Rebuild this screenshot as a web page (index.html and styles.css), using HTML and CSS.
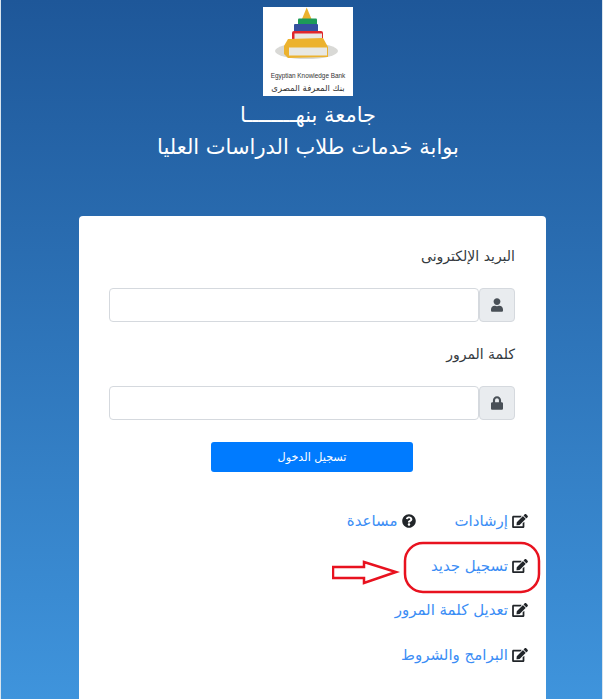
FILE: index.html
```html
<!DOCTYPE html>
<html lang="ar" dir="rtl">
<head>
    <meta charset="UTF-8">
    <meta name="viewport" content="width=device-width, initial-scale=1.0">
    <title>بوابة خدمات طلاب الدراسات العليا</title>
    <link rel="stylesheet" href="styles.css">
</head>
<body>
    <svg class="icon-defs" aria-hidden="true">
        <symbol id="i-user" viewBox="0 0 448 512"><path d="M224 256c70.7 0 128-57.3 128-128S294.7 0 224 0 96 57.3 96 128s57.3 128 128 128zm89.6 32h-16.7c-22.2 10.2-46.9 16-72.9 16s-50.6-5.8-72.9-16h-16.7C60.2 288 0 348.2 0 422.4V464c0 26.5 21.5 48 48 48h352c26.5 0 48-21.5 48-48v-41.6c0-74.2-60.2-134.4-134.4-134.4z"/></symbol>
        <symbol id="i-lock" viewBox="0 0 448 512"><path d="M400 224h-24v-72C376 68.2 307.8 0 224 0S72 68.2 72 152v72H48c-26.5 0-48 21.5-48 48v192c0 26.5 21.5 48 48 48h352c26.5 0 48-21.5 48-48V272c0-26.5-21.5-48-48-48zm-104 0H152v-72c0-39.7 32.3-72 72-72s72 32.3 72 72v72z"/></symbol>
        <symbol id="i-edit" viewBox="0 0 576 512"><path d="M402.6 83.2l90.2 90.2c3.8 3.8 3.8 10 0 13.8L274.4 405.6l-92.8 10.3c-12.4 1.4-22.9-9.1-21.5-21.5l10.3-92.8L388.8 83.2c3.8-3.8 10-3.8 13.8 0zm162-22.9l-48.8-48.8c-15.2-15.2-39.9-15.2-55.2 0l-35.4 35.4c-3.8 3.8-3.8 10 0 13.8l90.2 90.2c3.8 3.8 10 3.8 13.8 0l35.4-35.4c15.2-15.3 15.2-40 0-55.2zM384 346.2V448H64V128h229.8c3.2 0 6.2-1.3 8.5-3.5l40-40c7.6-7.6 2.2-20.5-8.5-20.5H48C21.5 64 0 85.5 0 112v352c0 26.5 21.5 48 48 48h352c26.5 0 48-21.5 48-48V306.2c0-10.7-12.9-16-20.5-8.5l-40 40c-2.2 2.3-3.5 5.3-3.5 8.5z"/></symbol>
        <symbol id="i-help" viewBox="0 0 512 512"><path d="M504 256c0 136.997-111.043 248-248 248S8 392.997 8 256C8 119.083 119.043 8 256 8s248 111.083 248 248zM262.655 90c-54.497 0-89.255 22.957-116.549 63.758-3.536 5.286-2.353 12.415 2.715 16.258l34.699 26.31c5.205 3.947 12.621 3.008 16.665-2.122 17.864-22.658 30.113-35.797 57.303-35.797 20.429 0 45.698 13.148 45.698 32.958 0 14.976-12.363 22.667-32.534 33.976C247.128 238.528 216 254.941 216 296v4c0 6.627 5.373 12 12 12h56c6.627 0 12-5.373 12-12v-1.333c0-28.462 83.186-29.647 83.186-106.667 0-58.002-60.165-102-116.531-102zM256 338c-25.365 0-46 20.635-46 46 0 25.364 20.635 46 46 46s46-20.636 46-46c0-25.365-20.635-46-46-46z"/></symbol>
    </svg>

    <div class="page">
        <header class="hero">
            <svg class="logo" viewBox="0 0 90 89" role="img" aria-label="Egyptian Knowledge Bank">
                <rect class="logo-bg" width="90" height="89"/>
                <ellipse class="logo-shadow" cx="43.5" cy="44" rx="31.5" ry="8"/>
                <polygon class="logo-gold" points="43.7,0.5 39,12 48.5,12"/>
                <rect class="logo-green" x="35" y="11.5" width="19" height="7.5" rx="1"/>
                <rect class="logo-blue" x="31" y="17" width="24" height="9" rx="1"/>
                <rect class="logo-red" x="29" y="24" width="31" height="12" rx="2"/>
                <rect class="logo-page" x="31.5" y="26.5" width="27.5" height="7.5"/>
                <polygon class="logo-gold" points="25,32 60,31 65,40 65,50 25,51 21,47 21,39"/>
                <rect class="logo-page" x="26" y="40.5" width="38" height="8"/>
                <text class="logo-en" x="45" y="71" direction="ltr" text-anchor="middle">Egyptian Knowledge Bank</text>
                <text class="logo-ar" x="45" y="84" text-anchor="middle">بنك المعرفة المصرى</text>
            </svg>
            <h1 class="hero-title">جامعة بنهــــــــا</h1>
            <h2 class="hero-sub">بوابة خدمات طلاب الدراسات العليا</h2>
        </header>

        <main class="login-card">
            <label class="field-label">البريد الإلكترونى</label>
            <div class="input-group">
                <span class="input-addon"><svg class="addon-icon"><use href="#i-user"/></svg></span>
                <input class="input-box" type="text">
            </div>

            <label class="field-label second">كلمة المرور</label>
            <div class="input-group">
                <span class="input-addon"><svg class="addon-icon"><use href="#i-lock"/></svg></span>
                <input class="input-box" type="password">
            </div>

            <div class="submit-row">
                <button class="submit-button" type="button">تسجيل الدخول</button>
            </div>

            <ul class="link-list">
                <li class="link-row">
                    <a class="card-link" href="#"><svg class="link-icon"><use href="#i-edit"/></svg>إرشادات</a>
                    <a class="card-link help-link" href="#"><svg class="help-icon"><use href="#i-help"/></svg>مساعدة</a>
                </li>
                <li class="link-row"><a class="card-link" href="#"><svg class="link-icon"><use href="#i-edit"/></svg>تسجيل جديد</a></li>
                <li class="link-row"><a class="card-link" href="#"><svg class="link-icon"><use href="#i-edit"/></svg>تعديل كلمة المرور</a></li>
                <li class="link-row"><a class="card-link" href="#"><svg class="link-icon"><use href="#i-edit"/></svg>البرامج والشروط</a></li>
            </ul>
        </main>

        <!-- red markup drawn on top of the screenshot -->
        <svg class="markup" viewBox="0 0 212 54" aria-hidden="true">
            <rect class="markup-line" x="73" y="2" width="134" height="49" rx="18"/>
            <polygon class="markup-line" points="1,26 32,26 32,21 64,31 32,42 32,37 1,37"/>
        </svg>
    </div>
</body>
</html>
```

FILE: styles.css
```css
* {
    box-sizing: border-box;
}

html, body {
    margin: 0;
    height: 699px;
    overflow: hidden;
}

body {
    font-family: "DejaVu Sans", sans-serif;
    background-color: #fff;
}

.icon-defs {
    display: none;
}

.page {
    position: relative;
    height: 699px;
    display: flex;
    flex-direction: column;
    background: linear-gradient(to bottom, #1e5799 0%, #3f94dc 100%);
    border-left: 1px solid #d8e4ee;
    border-right: 1px solid #d8e4ee;
}

.hero {
    display: flex;
    flex-direction: column;
    align-items: center;
    padding: 7px 0 0 13px;
    color: #fff;
}

.logo {
    width: 90px;
    height: 89px;
    display: block;
}

.logo-bg { fill: #fff; }
.logo-shadow { fill: #d9d9d6; }
.logo-gold { fill: #ecb22e; }
.logo-green { fill: #1d9a58; }
.logo-blue { fill: #34509f; }
.logo-red { fill: #e0262c; }
.logo-page { fill: #e8e8e4; }

.logo-en {
    font-family: "Liberation Sans", sans-serif;
    font-size: 6.4px;
    fill: #333;
}

.logo-ar {
    font-family: "DejaVu Sans", sans-serif;
    font-size: 8.5px;
    fill: #333;
}

.hero-title,
.hero-sub {
    margin: 0;
    font-size: 21px;
    font-weight: normal;
    line-height: 32px;
}

.hero-title {
    margin-top: 3px;
}

.login-card {
    flex: 1;
    width: 467px;
    margin: 53px 56px 0 0;
    padding: 28px 31px 0 30px;
    background-color: #fff;
    border-radius: 4px 4px 0 0;
    color: #343a40;
}

.field-label {
    display: block;
    font-size: 14px;
    line-height: 24px;
}

.field-label.second {
    margin-top: 20px;
}

.input-group {
    display: flex;
    height: 34px;
    margin-top: 20px;
}

.input-addon {
    width: 36px;
    display: flex;
    align-items: center;
    justify-content: center;
    background-color: #e9ecef;
    border: 1px solid #d5d9de;
    border-radius: 4px;
}

.addon-icon {
    width: 12px;
    height: 14px;
    fill: #495057;
}

.input-box {
    flex: 1;
    min-width: 0;
    background-color: #fff;
    border: 1px solid #d5d9de;
    border-radius: 4px;
}

.submit-row {
    display: flex;
    justify-content: center;
    margin-top: 22px;
}

.submit-button {
    width: 202px;
    height: 30px;
    font-family: inherit;
    font-size: 11.2px;
    color: #fff;
    background-color: #007bff;
    border: none;
    border-radius: 3px;
}

.link-list {
    list-style: none;
    margin: 27px -13px 0 0;
    padding: 0;
}

.link-row {
    display: flex;
    align-items: center;
    height: 44.5px;
    gap: 38px;
}

.card-link {
    display: flex;
    align-items: center;
    gap: 4px;
    font-size: 15px;
    color: #3b8df5;
    text-decoration: none;
}

.link-icon {
    width: 16px;
    height: 14px;
    fill: #212529;
}

.help-link {
    gap: 5px;
}

.help-icon {
    width: 14px;
    height: 14px;
    fill: #212529;
}

.markup {
    position: absolute;
    left: 331px;
    top: 541px;
    width: 212px;
    height: 54px;
}

.markup-line {
    fill: none;
    stroke: #e8121f;
    stroke-width: 2.5px;
}
```
